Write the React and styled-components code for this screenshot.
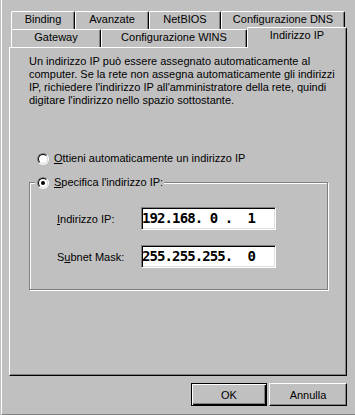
import React from 'react'
import styled, { createGlobalStyle } from 'styled-components'

const face = '#c0c0c0'
const light = '#dfdfdf'
const shadow = '#808080'

const Global = createGlobalStyle`
  body {
    margin: 0;
    background: ${face};
  }
`

const Window = styled.div`
  box-sizing: border-box;
  width: 354px;
  height: 415px;
  margin-left: 1px;
  border-left: 1px solid #fff;
  border-bottom: 1px solid ${shadow};
  padding: 11px 0 0 7px;
  font-family: 'Liberation Sans', Arial, sans-serif;
  font-size: 11px;
  color: #000;
`

const TabRow = styled.div`
  display: flex;
  align-items: flex-end;
  height: 18px;
  padding-left: 2px;
`

const Tab = styled.div`
  box-sizing: border-box;
  flex: none;
  width: ${(p) => p.$w}px;
  height: ${(p) => (p.$active ? 21 : 18)}px;
  margin-bottom: ${(p) => (p.$active ? -1 : 0)}px;
  position: relative;
  z-index: ${(p) => (p.$active ? 1 : 0)};
  padding-top: 1px;
  border-top: 1px solid #fff;
  border-left: 1px solid #fff;
  border-right: 1px solid #000;
  border-radius: 2px 2px 0 0;
  box-shadow: inset -1px 0 ${shadow};
  background: ${face};
  text-align: center;
  line-height: 13px;
  white-space: nowrap;
`

const Panel = styled.div`
  box-sizing: border-box;
  width: 338px;
  height: 329px;
  border: 1px solid;
  border-color: #fff #000 #000 #fff;
  box-shadow: inset -1px -1px ${shadow};
  padding: 7px 0 0 19px;
`

const Desc = styled.p`
  margin: 0;
  line-height: 13px;
  white-space: nowrap;
`

const Key = styled.u`
  text-decoration: underline;
  text-underline-offset: 1px;
`

const RadioRow = styled.label`
  display: flex;
  align-items: center;
  gap: 5px;
  height: 13px;
  line-height: 13px;
  margin: 45px 0 0 8px;
`

const RadioOuter = styled.span`
  box-sizing: border-box;
  flex: none;
  width: 12px;
  height: 12px;
  border-radius: 50%;
  border: 1px solid;
  border-color: ${shadow} #fff #fff ${shadow};
  display: flex;
`

const RadioInner = styled.span`
  box-sizing: border-box;
  width: 10px;
  height: 10px;
  border-radius: 50%;
  border: 1px solid;
  border-color: #000 ${light} ${light} #000;
  background: #fff;
  display: flex;
  align-items: center;
  justify-content: center;

  &::after {
    content: '';
    width: 4px;
    height: 4px;
    border-radius: 50%;
    background: ${(p) => (p.$checked ? '#000' : 'transparent')};
  }
`

const Group = styled.div`
  box-sizing: border-box;
  width: 299px;
  height: 108px;
  margin-top: 17px;
  border: 1px solid ${shadow};
  box-shadow: inset 1px 1px #fff, 1px 1px #fff;
`

const Legend = styled.label`
  display: flex;
  width: max-content;
  align-items: center;
  gap: 5px;
  height: 13px;
  line-height: 13px;
  margin: -7px 0 0 5px;
  padding: 0 1px 0 2px;
  background: ${face};
`

const Fields = styled.div`
  display: grid;
  grid-template-columns: 84px 135px;
  align-items: center;
  row-gap: 15px;
  margin-top: 18px;
  padding-left: 27px;
`

// octets are padded with spaces the way the old IP control shows them
const IpBox = styled.div`
  box-sizing: border-box;
  height: 23px;
  padding: 2px 0 0 0;
  background: #fff;
  border: 1px solid;
  border-color: ${shadow} #fff #fff ${shadow};
  box-shadow: inset 1px 1px #000, inset -1px -1px ${light};
  font-family: 'DejaVu Sans Mono', 'Liberation Mono', monospace;
  font-weight: bold;
  font-size: 14px;
  letter-spacing: -0.9px;
  line-height: 16px;
  white-space: pre;
`

const ButtonRow = styled.div`
  display: flex;
  justify-content: flex-end;
  gap: 2px;
  width: 338px;
  margin-top: 7px;
`

const Button = styled.button`
  box-sizing: border-box;
  width: ${(p) => p.$w}px;
  height: 23px;
  padding: 0;
  background: ${face};
  font: inherit;
  color: #000;
  border: 1px solid;
  border-color: ${(p) => (p.$default ? '#000' : '#fff #000 #000 #fff')};
  box-shadow: ${(p) =>
    p.$default
      ? `inset 1px 1px #fff, inset -1px -1px #000, inset -2px -2px ${shadow}`
      : `inset -1px -1px ${shadow}`};
`

const Radio = ({ checked }) => (
  <RadioOuter>
    <RadioInner $checked={checked} />
  </RadioOuter>
)

export default function App() {
  return (
    <>
      <Global />
      <Window>
        <TabRow>
          <Tab $w={64}>Binding</Tab>
          <Tab $w={74}>Avanzate</Tab>
          <Tab $w={72}>NetBIOS</Tab>
          <Tab $w={124}>Configurazione DNS</Tab>
        </TabRow>
        <TabRow>
          <Tab $w={90}>Gateway</Tab>
          <Tab $w={146}>Configurazione WINS</Tab>
          <Tab $w={100} $active>
            Indirizzo IP
          </Tab>
        </TabRow>
        <Panel>
          <Desc>
            Un indirizzo IP può essere assegnato automaticamente al
            <br />
            computer. Se la rete non assegna automaticamente gli indirizzi
            <br />
            IP, richiedere l'indirizzo IP all'amministratore della rete, quindi
            <br />
            digitare l'indirizzo nello spazio sottostante.
          </Desc>
          <RadioRow>
            <Radio />
            <span>
              <Key>O</Key>ttieni automaticamente un indirizzo IP
            </span>
          </RadioRow>
          <Group>
            <Legend>
              <Radio checked />
              <span>
                <Key>S</Key>pecifica l'indirizzo IP:
              </span>
            </Legend>
            <Fields>
              <span>
                <Key>I</Key>ndirizzo IP:
              </span>
              <IpBox>{'192.168. 0 .  1'}</IpBox>
              <span>
                S<Key>u</Key>bnet Mask:
              </span>
              <IpBox>{'255.255.255.  0'}</IpBox>
            </Fields>
          </Group>
        </Panel>
        <ButtonRow>
          <Button $w={76} $default>
            OK
          </Button>
          <Button $w={78}>Annulla</Button>
        </ButtonRow>
      </Window>
    </>
  )
}
